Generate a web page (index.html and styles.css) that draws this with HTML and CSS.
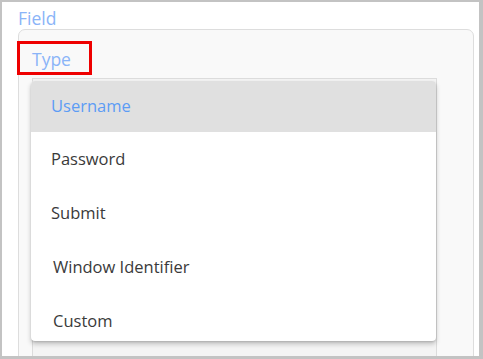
FILE: index.html
```html
<!DOCTYPE html>
<html>
<head>
<meta charset="utf-8">
<link rel="stylesheet" href="styles.css">
</head>
<body>
<div class="frame">
  <div class="field-label">Field</div>
  <div class="panel">
    <div class="type-label">Type</div>
    <div class="select"></div>
  </div>
  <div class="highlight-box"></div>
  <ul class="menu">
    <li class="item active"><span>Username</span></li>
    <li class="item"><span>Password</span></li>
    <li class="item"><span>Submit</span></li>
    <li class="item shift"><span>Window Identifier</span></li>
    <li class="item shift"><span>Custom</span></li>
  </ul>
</div>
</body>
</html>
```

FILE: styles.css
```css
* { box-sizing: border-box; }
html, body { margin: 0; padding: 0; background: #fff; }
body { font-family: "Open Sans", "Noto Sans", sans-serif; }

.frame {
  position: relative;
  width: 483px;
  height: 359px;
  overflow: hidden;
  background: #fff;
  border-style: solid;
  border-color: #c3c3c3;
  border-width: 2px 4px 3px 2px;
  padding: 6px 0 0 16px;
}

.field-label {
  color: #8ab4f8;
  font-size: 17.5px;
  line-height: 20px;
  height: 21px;
}

.panel {
  width: 456px;
  height: 400px;
  background: #f9f9f9;
  border: 1px solid #dddddd;
  border-radius: 7px;
  padding: 19px 0 0 13px;
}

.type-label {
  color: #8ab4f8;
  font-size: 17.5px;
  line-height: 20px;
  height: 29px;
}

.select {
  width: 405px;
  height: 300px;
  background: #f4f4f4;
  border: 1px solid #dcdcdc;
}

.highlight-box {
  position: absolute;
  left: 15px;
  top: 39px;
  width: 75px;
  height: 34px;
  border: 3px solid #ee0000;
}

.menu {
  position: absolute;
  left: 29px;
  top: 79px;
  width: 405px;
  height: 260px;
  margin: 0;
  padding: 0;
  list-style: none;
  background: #fff;
  border-radius: 4px;
  overflow: hidden;
  box-shadow: 0 3px 5px rgba(0,0,0,0.22), 0 1px 2px rgba(0,0,0,0.12);
}

.item {
  height: 54px;
  display: flex;
  align-items: center;
  padding-left: 20px;
  font-size: 16.5px;
  color: #3a3a3a;
}
.item span { position: relative; top: -1px; }

.item.active {
  height: 51px;
  background: #e0e0e0;
  color: #5c9cf5;
}
.item.shift { padding-left: 22px; }
```
